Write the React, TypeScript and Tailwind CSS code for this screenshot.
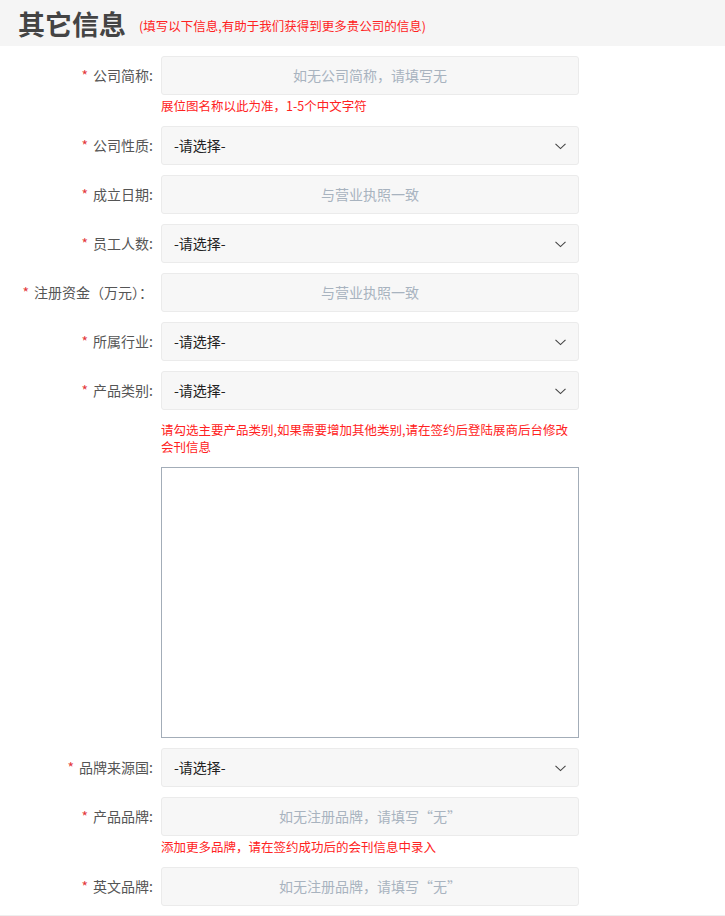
import React from "react";

const font = { fontFamily: '"Microsoft YaHei", "Noto Sans CJK SC", "Noto Sans", sans-serif' };

function Label({ text }: { text: string }) {
  return (
    <div className="w-[153px] shrink-0 text-right text-[14px] text-[#555] leading-[39px] whitespace-nowrap">
      <span className="text-[#e4393c] mr-[5px]">*</span>
      {text}
    </div>
  );
}

function Chevron() {
  return (
    <svg width="11" height="7" viewBox="0 0 11 7" className="absolute right-[12px] top-[16px]">
      <path d="M0.5 0.8 L5.5 5.6 L10.5 0.8" fill="none" stroke="#444" strokeWidth="1.1" />
    </svg>
  );
}

function InputRow({ label, placeholder }: { label: string; placeholder: string }) {
  return (
    <div className="flex">
      <Label text={label} />
      <div className="ml-[8px] w-[418px] h-[39px] rounded-[3px] border border-[#ebebeb] bg-[#f7f7f7] flex items-center justify-center text-[14px] text-[#a8b3bf]">
        {placeholder}
      </div>
    </div>
  );
}

function SelectRow({ label }: { label: string }) {
  return (
    <div className="flex">
      <Label text={label} />
      <div className="relative ml-[8px] w-[418px] h-[39px] rounded-[3px] border border-[#ebebeb] bg-[#f7f7f7] flex items-center pl-[12px] text-[14px] text-[#222]">
        -请选择-
        <Chevron />
      </div>
    </div>
  );
}

function Hint({ children }: { children: React.ReactNode }) {
  return <div className="ml-[161px] w-[418px] text-[12.5px] text-[#f22] leading-[20px]">{children}</div>;
}

export default function App() {
  return (
    <div className="w-[725px] h-[916px] bg-white overflow-hidden" style={font}>
      <div className="h-[46px] bg-[#f5f5f5] flex items-center pl-[18px]">
        <span className="text-[27px] font-bold text-[#444] leading-none">其它信息</span>
        <span className="ml-[13px] mt-[7px] text-[12.5px] text-[#f22]">(填写以下信息,有助于我们获得到更多贵公司的信息)</span>
      </div>
      <div className="pt-[10px] border-b border-[#eee] pb-[9px]">
        <InputRow label="公司简称:" placeholder="如无公司简称，请填写无" />
        <div className="pt-[1px] mb-[10px]">
          <Hint>展位图名称以此为准，1-5个中文字符</Hint>
        </div>
        <div className="flex flex-col gap-[10px]">
          <SelectRow label="公司性质:" />
          <InputRow label="成立日期:" placeholder="与营业执照一致" />
          <SelectRow label="员工人数:" />
          <InputRow label="注册资金（万元）：" placeholder="与营业执照一致" />
          <SelectRow label="所属行业:" />
          <SelectRow label="产品类别:" />
        </div>
        <div className="mt-[11px] ml-[161px] w-[418px] text-[12.5px] text-[#f22] leading-[17px]">
          请勾选主要产品类别,如果需要增加其他类别,请在签约后登陆展商后台修改会刊信息
        </div>
        <div className="mt-[12px] ml-[161px] w-[418px] h-[271px] border border-[#a3adb8] bg-white" />
        <div className="mt-[10px] flex flex-col gap-[10px]">
          <SelectRow label="品牌来源国:" />
          <InputRow label="产品品牌:" placeholder="如无注册品牌，请填写“无”" />
        </div>
        <div className="pt-[1px] mb-[10px]">
          <Hint>添加更多品牌，请在签约成功后的会刊信息中录入</Hint>
        </div>
        <InputRow label="英文品牌:" placeholder="如无注册品牌，请填写“无”" />
      </div>
    </div>
  );
}
